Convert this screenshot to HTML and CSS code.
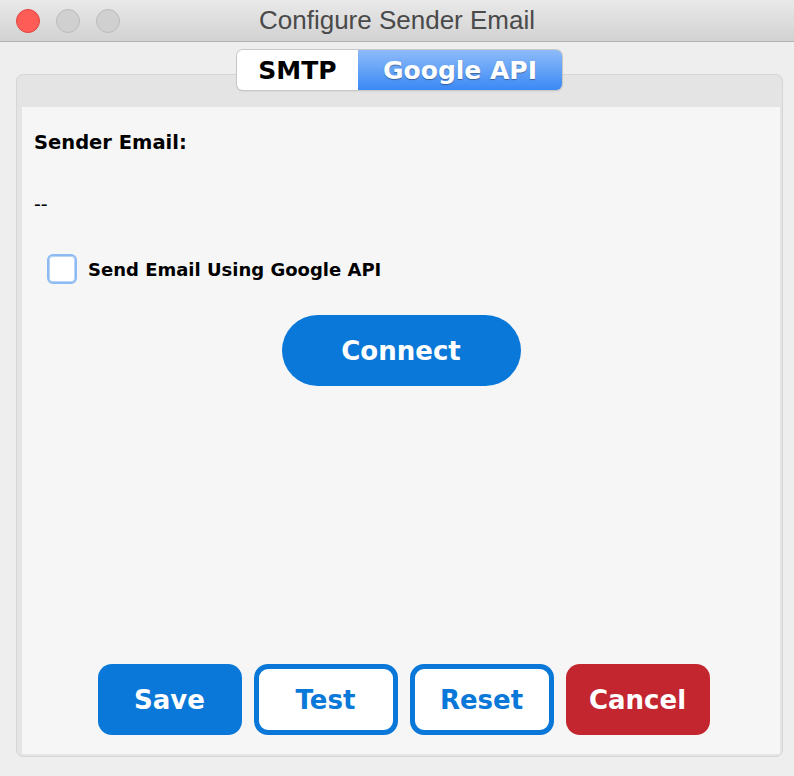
FILE: index.html
```html
<!DOCTYPE html>
<html lang="en">
<head>
    <meta charset="UTF-8">
    <title>Configure Sender Email</title>
    <link rel="stylesheet" href="styles.css">
</head>
<body>
    <div class="window">
        <div class="titlebar">
            <div class="lights">
                <span class="light close"></span>
                <span class="light"></span>
                <span class="light"></span>
            </div>
            <p class="title">Configure Sender Email</p>
        </div>
        <div class="content">
            <div class="tabs">
                <button class="tab">SMTP</button>
                <button class="tab active">Google API</button>
            </div>
            <div class="panel">
                <div class="panel-inner">
                    <p class="label">Sender Email:</p>
                    <p class="value">--</p>
                    <label class="check-row">
                        <span class="checkbox"></span>
                        <span>Send Email Using Google API</span>
                    </label>
                    <div class="connect-row">
                        <button class="btn btn-pill">Connect</button>
                    </div>
                    <div class="actions">
                        <button class="btn btn-primary">Save</button>
                        <button class="btn btn-outline">Test</button>
                        <button class="btn btn-outline">Reset</button>
                        <button class="btn btn-danger">Cancel</button>
                    </div>
                </div>
            </div>
        </div>
    </div>
</body>
</html>
```

FILE: styles.css
```css
:root{
    --blue: #0a78d8;
    --red: #c42630;
    --window-bg: #eeeeee;
}
*{
    padding: 0;
    margin: 0;
    box-sizing: border-box;
}
body{
    font-family: "DejaVu Sans", Verdana, sans-serif;
    background-color: var(--window-bg);
    color: #000;
}
.window{
    width: 794px;
    height: 776px;
    display: flex;
    flex-direction: column;
}
.titlebar{
    height: 42px;
    flex-shrink: 0;
    display: flex;
    align-items: center;
    position: relative;
    background: linear-gradient(#e9e9e9, #d2d2d2);
    border-bottom: 1px solid #b1b1b1;
}
.lights{
    display: flex;
    gap: 16px;
    padding-left: 16px;
}
.light{
    width: 24px;
    height: 24px;
    border-radius: 50%;
    background-color: #d0d0d0;
    border: 1px solid #bcbcbc;
}
.light.close{
    background-color: #fd5d56;
    border-color: #e0453f;
}
.title{
    position: absolute;
    left: 0;
    right: 0;
    text-align: center;
    font-family: "Liberation Sans", Arial, sans-serif;
    font-size: 26px;
    color: #4a4a4a;
}
.content{
    flex: 1;
    display: flex;
    flex-direction: column;
    padding: 8px 11px 19px 16px;
}
.tabs{
    align-self: center;
    display: flex;
    margin-bottom: -16px;
    position: relative;
    z-index: 1;
    border-radius: 6px;
    box-shadow: 0 0 0 1px #c8c8c8, 0 1px 2px rgba(0, 0, 0, 0.15);
}
.tab{
    font-family: inherit;
    font-size: 25px;
    font-weight: bold;
    height: 40px;
    border: none;
    background-color: #fff;
    color: #000;
    padding: 0 20px;
}
.tab:first-child{
    width: 121px;
    border-radius: 6px 0 0 6px;
}
.tab.active{
    width: 204px;
    border-radius: 0 6px 6px 0;
    color: #fff;
    background: linear-gradient(#8ebbf9, #3a89f5);
    text-shadow: 0 1px 1px rgba(0, 0, 0, 0.35);
}
.panel{
    flex: 1;
    display: flex;
    background-color: #e4e4e4;
    border: 1px solid #d6d6d6;
    border-radius: 7px;
    padding: 32px 2px 2px 5px;
}
.panel-inner{
    flex: 1;
    display: flex;
    flex-direction: column;
    background-color: #f6f6f6;
    padding: 24px 12px 19px;
}
.label{
    font-size: 19.5px;
    font-weight: bold;
    line-height: 24px;
}
.value{
    font-size: 19px;
    line-height: 24px;
    margin-top: 37px;
}
.check-row{
    display: flex;
    align-items: center;
    gap: 11px;
    margin-top: 38px;
    margin-left: 13px;
    font-size: 18px;
    font-weight: bold;
}
.checkbox{
    width: 30px;
    height: 30px;
    border-radius: 6px;
    background-color: #fff;
    border: 2px solid #8cbaf2;
    box-shadow: inset 0 0 0 1px #b9d4f5;
}
.connect-row{
    display: flex;
    justify-content: center;
    margin-top: 31px;
}
.btn{
    font-family: inherit;
    font-size: 26px;
    font-weight: bold;
    height: 71px;
    border: none;
    cursor: pointer;
}
.btn-pill{
    width: 239px;
    border-radius: 36px;
    background-color: var(--blue);
    color: #fff;
}
.actions{
    margin-top: auto;
    display: flex;
    justify-content: center;
    gap: 12px;
    padding-left: 5px;
}
.actions .btn{
    width: 144px;
    border-radius: 14px;
}
.btn-primary{
    background-color: var(--blue);
    color: #fff;
}
.btn-outline{
    background-color: #fff;
    color: var(--blue);
    border: 5px solid var(--blue);
}
.btn-danger{
    background-color: var(--red);
    color: #fff;
}
```
